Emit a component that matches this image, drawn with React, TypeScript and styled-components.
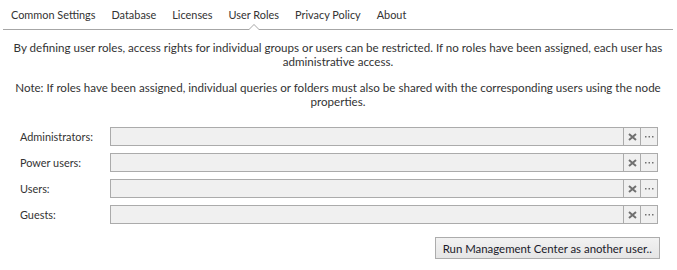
import React from "react";
import styled, { createGlobalStyle } from "styled-components";

const FONT = `"Lato", "Noto Sans", "DejaVu Sans", sans-serif`;

const Global = createGlobalStyle`
  html, body { margin: 0; padding: 0; background: #ffffff; }
  body { font-family: ${FONT}; font-size: 12px; color: #333; }
`;

const Page = styled.div`
  width: 677px;
  height: 270px;
  display: flex;
  flex-direction: column;
  box-sizing: border-box;
  padding: 0 4px 0 3px;
`;

const TabBar = styled.div`
  display: flex;
  gap: 16px;
  height: 29px;
  align-items: center;
  padding: 0 0 0 8px;
  border-bottom: 1px solid #a6a6a6;
`;

const Tab = styled.div<{ $active?: boolean }>`
  position: relative;
  height: 29px;
  line-height: 30px;
  font-size: 10.9px;
  color: #333;
  white-space: nowrap;
  ${(p) =>
    p.$active &&
    `
    &::before {
      content: "";
      position: absolute;
      left: 50%;
      bottom: -1px;
      margin-left: -6px;
      border-left: 6px solid transparent;
      border-right: 6px solid transparent;
      border-bottom: 6px solid #a6a6a6;
    }
    &::after {
      content: "";
      position: absolute;
      left: 50%;
      bottom: -1px;
      margin-left: -5px;
      border-left: 5px solid transparent;
      border-right: 5px solid transparent;
      border-bottom: 5px solid #ffffff;
    }
  `}
`;

const Description = styled.div`
  padding: 11px 10px 0 10px;
  display: flex;
  flex-direction: column;
  gap: 12px;
`;

const Para = styled.p`
  margin: 0;
  text-align: center;
  font-size: 11.6px;
  line-height: 14px;
  color: #333;
`;

const Form = styled.div`
  display: flex;
  flex-direction: column;
  gap: 7px;
  padding: 18px 15px 0 17px;
`;

const Row = styled.div`
  display: flex;
  align-items: center;
  height: 19px;
`;

const Label = styled.div`
  width: 90px;
  font-size: 10.9px;
  color: #333;
`;

const Field = styled.div`
  flex: 1;
  display: flex;
  height: 19px;
  border: 1px solid #ababab;
  box-sizing: border-box;
  background: #f0f0f0;
`;

const Input = styled.div`
  flex: 1;
`;

const FieldButton = styled.div`
  width: 16px;
  border-left: 1px solid #ababab;
  display: flex;
  align-items: center;
  justify-content: center;
  background: #f0f0f0;
`;

const Footer = styled.div`
  display: flex;
  justify-content: flex-end;
  padding: 13px 13px 0 0;
`;

const Button = styled.button`
  height: 22px;
  padding: 0 7px;
  border: 1px solid #acacac;
  background: linear-gradient(#f2f2f2, #e5e5e5);
  font-family: ${FONT};
  font-size: 11.4px;
  color: #1a1a2a;
  border-radius: 0;
`;

const XIcon = () => (
  <svg width="9" height="8" viewBox="0 0 9 8">
    <path d="M1 1 L8 7 M8 1 L1 7" stroke="#707070" strokeWidth="2" />
  </svg>
);

const DotsIcon = () => (
  <svg width="9" height="3" viewBox="0 0 9 3">
    <rect x="0" y="1" width="1.5" height="1.5" fill="#707070" />
    <rect x="3.5" y="1" width="1.5" height="1.5" fill="#707070" />
    <rect x="7" y="1" width="1.5" height="1.5" fill="#707070" />
  </svg>
);

const tabs = ["Common Settings", "Database", "Licenses", "User Roles", "Privacy Policy", "About"];
const roles = ["Administrators:", "Power users:", "Users:", "Guests:"];

export default function App() {
  return (
    <>
      <Global />
      <Page>
        <TabBar>
          {tabs.map((t) => (
            <Tab key={t} $active={t === "User Roles"}>
              {t}
            </Tab>
          ))}
        </TabBar>
        <Description>
          <Para>
            By defining user roles, access rights for individual groups or users can be restricted. If no roles have been assigned, each user has administrative access.
          </Para>
          <Para>
            Note: If roles have been assigned, individual queries or folders must also be shared with the corresponding users using the node properties.
          </Para>
        </Description>
        <Form>
          {roles.map((r) => (
            <Row key={r}>
              <Label>{r}</Label>
              <Field>
                <Input />
                <FieldButton>
                  <XIcon />
                </FieldButton>
                <FieldButton>
                  <DotsIcon />
                </FieldButton>
              </Field>
            </Row>
          ))}
        </Form>
        <Footer>
          <Button>Run Management Center as another user..</Button>
        </Footer>
      </Page>
    </>
  );
}
